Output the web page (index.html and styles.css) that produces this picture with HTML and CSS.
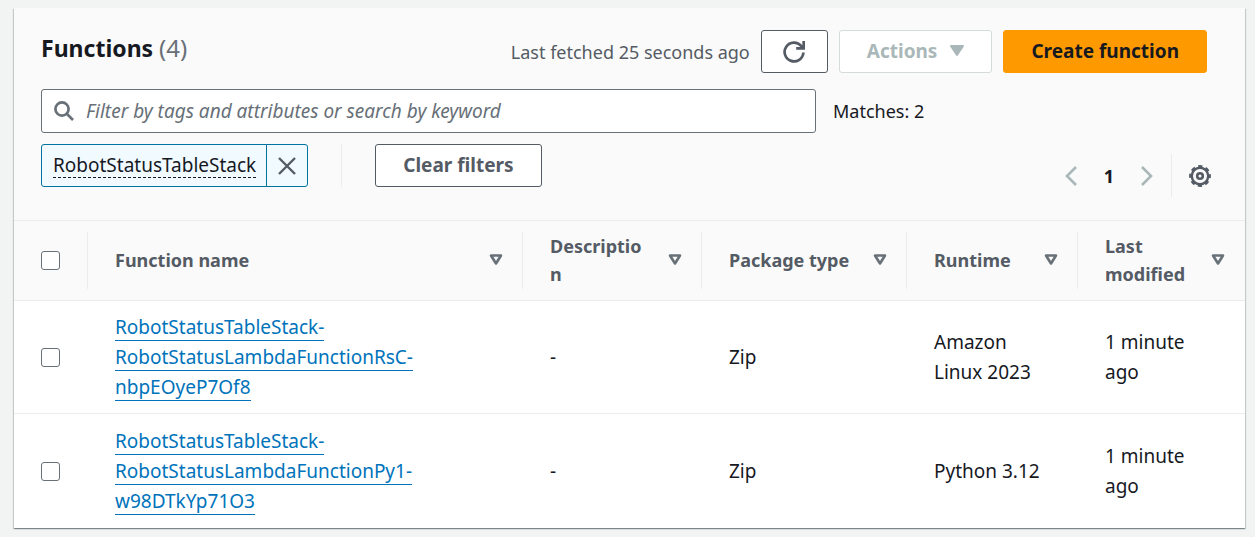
FILE: index.html
```html
<!DOCTYPE html>
<html lang="en">
<head>
<meta charset="utf-8">
<meta name="viewport" content="width=device-width, initial-scale=1">
<title>Functions</title>
<link rel="stylesheet" href="styles.css">
</head>
<body>
<main class="panel">
  <header class="panel-header">
    <div class="title-row">
      <h1 class="title">Functions <span class="count">(4)</span></h1>
      <div class="actions">
        <span class="fetched">Last fetched 25 seconds ago</span>
        <button class="btn btn-icon" type="button" aria-label="Refresh">
          <svg class="icon" viewBox="0 0 22 22" fill="none" stroke="currentColor" stroke-width="2.7"><path d="M20.4 11.5a9.4 9.4 0 1 1-2.2-6.6l1.6 1.8M20.7 0v7.3h-7.5"/></svg>
        </button>
        <button class="btn" type="button" disabled>Actions
          <svg class="caret" viewBox="0 0 14 12" fill="currentColor" stroke="currentColor" stroke-width="2" stroke-linejoin="round"><path d="M1 1h12L7 10z"/></svg>
        </button>
        <button class="btn btn-primary" type="button">Create function</button>
      </div>
    </div>
    <div class="tools">
      <div class="filters">
        <div class="search-row">
          <label class="search">
            <svg class="search-icon" viewBox="0 0 20 20" fill="none" stroke="currentColor" stroke-width="2.7"><circle cx="8" cy="8" r="6.6"/><path d="m12.5 12.5 6.5 6.5"/></svg>
            <input class="search-input" type="text" aria-label="Filter functions" placeholder="Filter by tags and attributes or search by keyword">
          </label>
          <span class="matches">Matches: 2</span>
        </div>
        <div class="token-row">
          <div class="token">
            <span class="token-label"><span class="token-text">RobotStatusTableStack</span></span>
            <button class="token-remove" type="button" aria-label="Remove filter">
              <svg class="close-icon" viewBox="0 0 18 18" fill="none" stroke="currentColor" stroke-width="2.4"><path d="m1 1 16 16M17 1 1 17"/></svg>
            </button>
          </div>
          <div class="clear">
            <button class="btn" type="button">Clear filters</button>
          </div>
        </div>
      </div>
      <div class="paging">
        <nav class="pages" aria-label="Pages">
          <button class="plain" type="button" disabled aria-label="Previous page"><svg class="chevron" viewBox="0 0 12 20" fill="none" stroke="currentColor" stroke-width="2.6"><path d="m11 1-9 9 9 9"/></svg></button>
          <button class="plain page" type="button">1</button>
          <button class="plain" type="button" disabled aria-label="Next page"><svg class="chevron" viewBox="0 0 12 20" fill="none" stroke="currentColor" stroke-width="2.6"><path d="m1 1 9 9-9 9"/></svg></button>
        </nav>
        <div class="settings">
          <button class="plain" type="button" aria-label="Preferences">
            <svg class="gear" viewBox="0 0 22 22" fill="none" stroke="currentColor"><circle cx="11" cy="11" r="8.2" stroke-width="2.4"/><circle cx="11" cy="11" r="9.6" stroke-width="2.6" stroke-dasharray="4.2 3.34" stroke-dashoffset="2.1"/><circle cx="11" cy="11" r="2.8" stroke-width="2.6"/></svg>
          </button>
        </div>
      </div>
    </div>
  </header>
  <table class="grid">
    <colgroup><col class="c-check"><col><col class="c-desc"><col class="c-package"><col class="c-runtime"><col class="c-modified"></colgroup>
    <thead>
      <tr>
        <th><div class="head head-check"><input class="check" type="checkbox" aria-label="Select all functions"></div></th>
        <th><div class="head"><span class="label">Function name</span><svg class="sort" viewBox="0 0 14 12"><path d="M2 1.5h10L7 9.5z"/></svg></div></th>
        <th><div class="head"><span class="label">Description</span><svg class="sort" viewBox="0 0 14 12"><path d="M2 1.5h10L7 9.5z"/></svg></div></th>
        <th><div class="head"><span class="label">Package type</span><svg class="sort" viewBox="0 0 14 12"><path d="M2 1.5h10L7 9.5z"/></svg></div></th>
        <th><div class="head"><span class="label">Runtime</span><svg class="sort" viewBox="0 0 14 12"><path d="M2 1.5h10L7 9.5z"/></svg></div></th>
        <th><div class="head"><span class="label">Last modified</span><svg class="sort" viewBox="0 0 14 12"><path d="M2 1.5h10L7 9.5z"/></svg></div></th>
      </tr>
    </thead>
    <tbody>
      <tr>
        <td><input class="check" type="checkbox" aria-label="Select first function"></td>
        <td><a class="link" href="#">RobotStatusTableStack-<wbr>RobotStatusLambdaFunctionRsC-<wbr>nbpEOyeP7Of8</a></td>
        <td>-</td><td>Zip</td><td>Amazon Linux 2023</td><td>1 minute ago</td>
      </tr>
      <tr>
        <td><input class="check" type="checkbox" aria-label="Select second function"></td>
        <td><a class="link" href="#">RobotStatusTableStack-<wbr>RobotStatusLambdaFunctionPy1-<wbr>w98DTkYp71O3</a></td>
        <td>-</td><td>Zip</td><td>Python 3.12</td><td>1 minute ago</td>
      </tr>
    </tbody>
  </table>
</main>
</body>
</html>
```
FILE: styles.css
```css
* { box-sizing: border-box; }
body {
  margin: 0;
  padding: 8px 10px 8px 14px;
  background: #f2f3f3;
  color: #16191f;
  font: 19px/30px "Noto Sans", "Open Sans", sans-serif;
}
svg { display: block; flex: none; }
button, input { font: inherit; color: inherit; }
.panel {
  background: #fff;
  box-shadow: 0 1px 1px 0 rgba(0, 28, 36, .3), 1px 1px 1px 0 rgba(0, 28, 36, .15), -1px 1px 1px 0 rgba(0, 28, 36, .15);
}
.panel-header {
  padding: 22px 34px 23px 27px;
  background: #fafafa;
  border-bottom: 1px solid #eaeded;
}
.title-row { display: flex; align-items: flex-start; justify-content: space-between; padding-right: 4px; }
.title { margin: 0; font-size: 23px; line-height: 36px; font-weight: 700; }
.count { font-size: 24px; font-weight: 400; color: #687078; }
.actions { display: flex; align-items: center; gap: 11px; }
.fetched { color: #545b64; font-size: 18px; }
.matches { font-size: 18px; }
.btn {
  display: flex;
  align-items: center;
  justify-content: center;
  gap: 13px;
  height: 43px;
  padding: 0 27px 2px;
  border: 1px solid #545b64;
  border-radius: 3px;
  background: #fff;
  color: #545b64;
  font-weight: 700;
  white-space: nowrap;
}
.btn:disabled { border-color: #d5dbdb; color: #aab7b8; }
.btn-icon { width: 67px; padding: 0; }
.btn-primary { border-color: #f90; background: #f90; color: #16191f; }
.icon { width: 22px; height: 22px; }
.caret { width: 14px; height: 12px; }
.tools { display: flex; align-items: flex-end; justify-content: space-between; margin-top: 16px; }
.filters { flex: 1; display: grid; gap: 11px; padding-bottom: 10px; }
.search-row { display: flex; align-items: center; gap: 17px; }
.search {
  flex: 0 1 775px;
  display: flex;
  align-items: center;
  gap: 12px;
  height: 44px;
  padding: 0 12px;
  border: 1px solid #687078;
  border-radius: 3px;
  background: #fff;
}
.search-icon { width: 20px; height: 20px; color: #687078; }
.search-input { flex: 1; min-width: 0; padding: 0; border: 0; outline: 0; background: none; }
.search-input::placeholder { color: #687078; font-style: italic; opacity: 1; }
.token-row { display: flex; }
.token {
  display: flex;
  height: 43px;
  border: 1px solid #0073a0;
  border-radius: 3px;
  background: #f1faff;
}
.token-label { display: flex; align-items: center; padding: 0 10px 0 11px; }
.token-text { line-height: 24px; border-bottom: 1px dashed #16191f; }
.token-remove {
  display: grid;
  place-items: center;
  width: 41px;
  padding: 0;
  border: 0;
  border-left: 1px solid #0073a0;
  background: none;
  color: #545b64;
}
.close-icon { width: 18px; height: 18px; }
.clear { margin-left: 33px; padding-left: 33px; border-left: 1px solid #eaeded; }
.paging { display: flex; height: 43px; }
.pages { display: flex; align-items: center; gap: 27px; padding-right: 18px; }
.plain { padding: 0; border: 0; background: none; }
.plain:disabled { color: #aab7b8; }
.page { font-size: 18px; font-weight: 700; }
.chevron { width: 12px; height: 20px; }
.settings { display: flex; align-items: center; padding-left: 17px; border-left: 1px solid #eaeded; color: #545b64; }
.gear { width: 22px; height: 22px; }
.grid { width: 100%; border-collapse: separate; border-spacing: 0; table-layout: fixed; }
.c-check { width: 74px; }
.c-desc { width: 179px; }
.c-package { width: 205px; }
.c-runtime { width: 171px; }
.c-modified { width: 167px; }
th { padding: 11px 0; background: #fafafa; border-bottom: 1px solid #eaeded; color: #545b64; text-align: left; font-size: 18px; line-height: 28px; }
.head {
  display: flex;
  align-items: center;
  justify-content: space-between;
  gap: 16px;
  height: 57px;
  padding: 0 19px 2px 27px;
  border-right: 1px solid #eaeded;
}
.head-check { padding-bottom: 0; }
th:last-child .head { border-right: 0; padding-right: 20px; }
.label { min-width: 0; overflow-wrap: anywhere; }
.sort { width: 14px; height: 12px; fill: none; stroke: #687078; stroke-width: 2.6; stroke-linejoin: round; }
td { height: 113px; padding: 11px 27px; border-bottom: 1px solid #eaeded; vertical-align: middle; }
td:first-child { padding: 0 27px; }
tbody tr:last-child td { height: 114px; border-bottom: 0; }
.check {
  display: block;
  appearance: none;
  width: 19px;
  height: 19px;
  margin: 0;
  border: 1px solid #687078;
  border-radius: 3px;
  background: #fff;
}
.link { color: #0073bb; text-decoration: none; border-bottom: 1px solid #0073bb; }
```
